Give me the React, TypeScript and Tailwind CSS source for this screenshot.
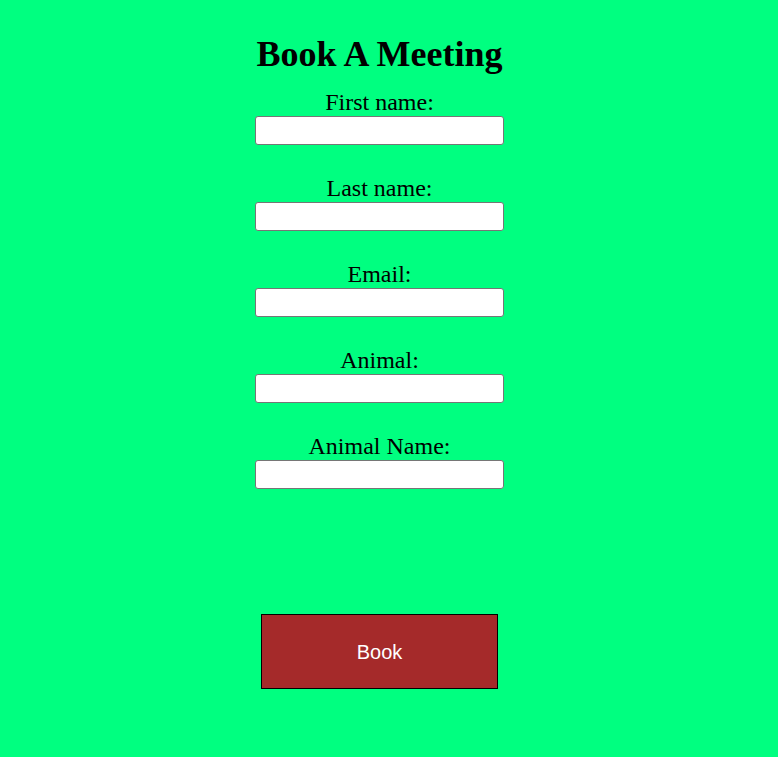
export default function App() {
  const fields = ['First name:', 'Last name:', 'Email:', 'Animal:', 'Animal Name:'];

  return (
    <div className="min-h-[757px] w-full bg-[#00ff80] flex flex-col items-center pr-[19px] font-['Liberation_Serif',serif] text-black">
      <h1 className="mt-[34px] text-[36px] leading-[41px] font-bold">Book A Meeting</h1>
      <form className="flex flex-col items-center mt-[14px]">
        {fields.map((f) => (
          <div key={f} className="flex flex-col items-center mb-[30px]">
            <label className="text-[24px] leading-[27px]">{f}</label>
            <input
              type="text"
              className="w-[249px] h-[29px] bg-white border border-[#767676] rounded-[3px] px-1 text-base"
            />
          </div>
        ))}
        <button
          type="button"
          className="mt-[95px] w-[237px] h-[75px] bg-[#a52a2a] border border-black text-white text-[20px] font-['Liberation_Sans',sans-serif]"
        >
          Book
        </button>
      </form>
    </div>
  );
}
